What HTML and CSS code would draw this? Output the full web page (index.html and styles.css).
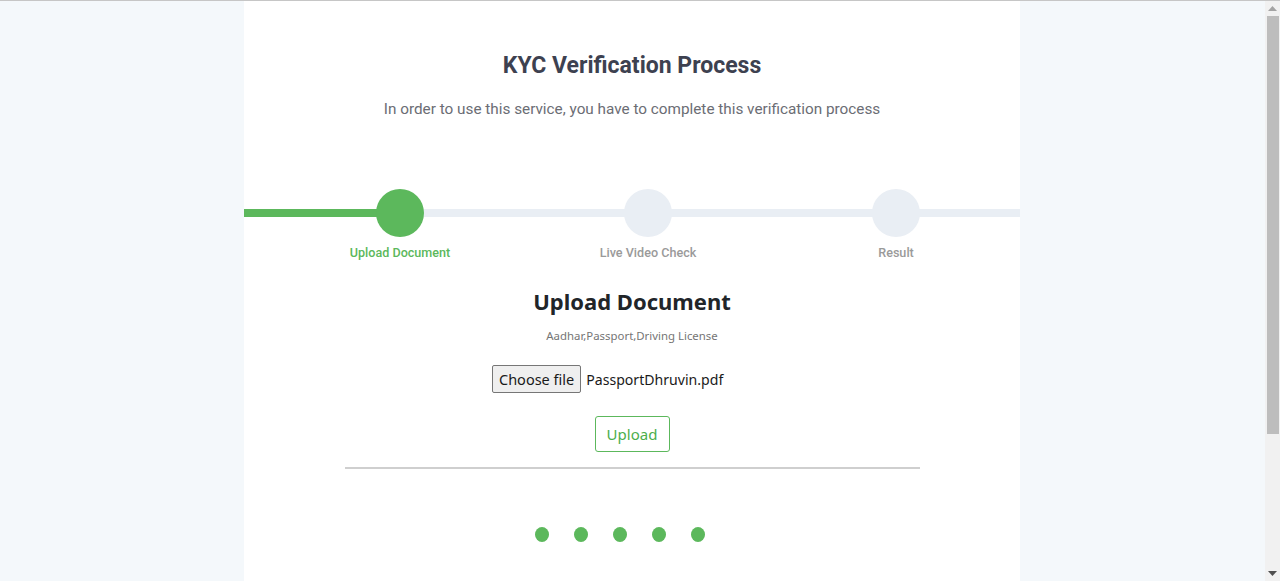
FILE: index.html
```html
<!DOCTYPE html>
<html lang="en">
<head>
<meta charset="utf-8">
<title>KYC Verification Process</title>
<link rel="stylesheet" href="styles.css">
</head>
<body>
<div class="frame">
  <div class="main">
    <div class="card">
      <h1 class="title">KYC Verification Process</h1>
      <p class="subtitle">In order to use this service, you have to complete this verification process</p>

      <div class="progress">
        <div class="track"><div class="track-fill"></div></div>
        <div class="steps">
          <div class="step active">
            <div class="circle"></div>
            <div class="label">Upload Document</div>
          </div>
          <div class="step">
            <div class="circle"></div>
            <div class="label">Live Video Check</div>
          </div>
          <div class="step">
            <div class="circle"></div>
            <div class="label">Result</div>
          </div>
        </div>
      </div>

      <div class="upload">
        <h2 class="upload-title">Upload Document</h2>
        <p class="upload-hint">Aadhar,Passport,Driving License</p>
        <div class="file-row">
          <span class="file-btn">Choose file</span>
          <span class="file-name">PassportDhruvin.pdf</span>
        </div>
        <button class="upload-btn" type="button">Upload</button>
        <div class="divider"></div>
        <div class="dots">
          <span class="dot"></span><span class="dot"></span><span class="dot"></span><span class="dot"></span><span class="dot"></span>
        </div>
      </div>
    </div>
  </div>
  <div class="scrollbar">
    <div class="sb-arrow sb-up"><svg width="9" height="5" viewBox="0 0 9 5"><path d="M0 5 L4.5 0 L9 5 Z" fill="#a3a3a3"/></svg></div>
    <div class="sb-thumb"></div>
    <div class="sb-track"></div>
    <div class="sb-arrow sb-down"><svg width="9" height="5" viewBox="0 0 9 5"><path d="M0 0 L4.5 5 L9 0 Z" fill="#505050"/></svg></div>
  </div>
</div>
</body>
</html>
```

FILE: styles.css
```css
* { box-sizing: border-box; }

html, body {
  margin: 0;
  padding: 0;
  height: 100%;
  overflow: hidden;
}

body {
  background: #f4f8fb;
  font-family: Roboto, "Liberation Sans", sans-serif;
}

.frame {
  display: flex;
  height: 100vh;
  border-top: 1px solid #c6c6c6;
}

.main {
  flex: 1;
  display: flex;
  justify-content: center;
  padding-right: 1px;
}

.card {
  width: 776px;
  background: #ffffff;
  padding-top: 51px;
  text-align: center;
}

.title {
  margin: 0;
  font-size: 23px;
  line-height: 27px;
  font-weight: 700;
  color: #3d4150;
}

.subtitle {
  margin: 20px 0 0;
  font-size: 15.3px;
  line-height: 20px;
  color: #6b6d74;
}

.progress {
  position: relative;
  margin-top: 70px;
}

.track {
  position: absolute;
  left: 0;
  right: 0;
  top: 20px;
  height: 8px;
  background: #e9eef4;
}

.track-fill {
  width: 156px;
  height: 100%;
  background: #5cb85c;
}

.steps {
  position: relative;
  display: flex;
  padding-left: 32px;
}

.step {
  width: 248px;
  display: flex;
  flex-direction: column;
  align-items: center;
}

.circle {
  width: 48px;
  height: 48px;
  border-radius: 50%;
  background: #e9eef4;
}

.step.active .circle {
  background: #5cb85c;
}

.label {
  margin-top: 8px;
  font-size: 12.6px;
  line-height: 15px;
  font-weight: 500;
  color: #9a9a9a;
}

.step.active .label {
  color: #5cb85c;
}

.upload {
  display: flex;
  flex-direction: column;
  align-items: center;
  font-family: "Noto Sans", "Open Sans", sans-serif;
}

.upload-title {
  margin: 26px 0 0;
  font-size: 22px;
  line-height: 30px;
  font-weight: 700;
  color: #212529;
}

.upload-hint {
  margin: 12px 0 0;
  font-size: 11.4px;
  line-height: 16px;
  color: #757575;
}

.file-row {
  margin-top: 21px;
  width: 280px;
  display: flex;
  align-items: center;
  gap: 5px;
  font-size: 14.1px;
  color: #1a1a1a;
}

.file-btn {
  display: inline-block;
  height: 28px;
  line-height: 26px;
  padding: 0 6px;
  border: 1px solid #767676;
  border-radius: 2px;
  background: #efefef;
  font-size: 14.5px;
}

.upload-btn {
  margin-top: 23px;
  width: 75px;
  height: 36px;
  padding: 0;
  border: 1px solid #5cb85c;
  border-radius: 3px;
  background: #ffffff;
  color: #4cae4c;
  font-family: "Noto Sans", "Open Sans", sans-serif;
  font-size: 15px;
}

.divider {
  margin-top: 15px;
  width: 575px;
  height: 2px;
  background: #cfcfcf;
}

.dots {
  margin-top: 58px;
  display: flex;
}

.dot {
  width: 14px;
  height: 15px;
  margin-right: 25px;
  border-radius: 50%;
  background: #5cb85c;
}

.scrollbar {
  width: 15px;
  display: flex;
  flex-direction: column;
  background: #f1f1f1;
}

.sb-arrow {
  height: 15px;
  display: flex;
  align-items: center;
  justify-content: center;
}

.sb-thumb {
  height: 418px;
  margin: 0 1px 0 2px;
  background: #bdbdbd;
}

.sb-track {
  flex: 1;
}
```
